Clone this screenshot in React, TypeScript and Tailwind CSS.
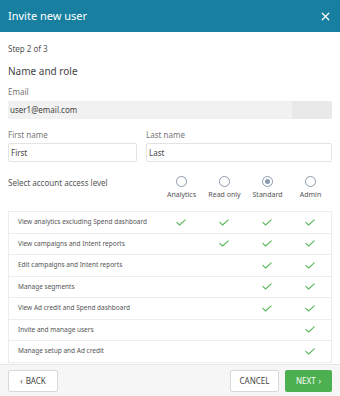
import { X } from 'lucide-react';

const levels = ['Analytics', 'Read only', 'Standard', 'Admin'];

const permissions: { label: string; from: number }[] = [
	{ label: 'View analytics excluding Spend dashboard', from: 0 },
	{ label: 'View campaigns and Intent reports', from: 1 },
	{ label: 'Edit campaigns and Intent reports', from: 2 },
	{ label: 'Manage segments', from: 2 },
	{ label: 'View Ad credit and Spend dashboard', from: 2 },
	{ label: 'Invite and manage users', from: 3 },
	{ label: 'Manage setup and Ad credit', from: 3 },
];

const Check = () => (
	<svg width="10" height="7" viewBox="0 0 10 7" fill="none">
		<path
			d="M0.8 3.4L3.6 6L9.2 0.8"
			stroke="#5cb85c"
			strokeWidth="1.1"
			strokeLinecap="round"
			strokeLinejoin="round"
		/>
	</svg>
);

const Radio = ({ checked }: { checked?: boolean }) => (
	<span className="flex h-[11px] w-[11px] items-center justify-center rounded-full border border-[#8c9aad] bg-white">
		{checked && <span className="h-[5px] w-[5px] rounded-full bg-[#8c9aad]" />}
	</span>
);

const App = (): JSX.Element => {
	return (
		<div
			className="flex h-[396px] w-[340px] flex-col bg-white text-[#444]"
			style={{ fontFamily: '"Noto Sans", Arial, sans-serif' }}
		>
			<div className="flex h-[32px] shrink-0 items-center justify-between bg-[#187fa1] pl-2 pr-[8px]">
				<span className="text-[11px] text-white">Invite new user</span>
				<X size={13} strokeWidth={2.2} className="text-white" />
			</div>

			<div className="flex flex-1 flex-col px-2">
				<div className="mt-[12px] text-[8px] leading-[10px] text-[#555]">Step 2 of 3</div>
				<div className="mt-[11px] text-[10px] leading-[12px] text-[#444]">Name and role</div>

				<div className="mt-[10px] text-[8px] leading-[10px] text-[#777]">Email</div>
				<div className="mt-[4px] flex h-[18px] rounded-[2px] bg-[#e9e9e9]">
					<div className="flex w-[284px] items-center bg-[#f1f1f1] pl-[2px] text-[8px] text-[#444]">
						user1@email.com
					</div>
				</div>

				<div className="mt-[11px] flex gap-[9px]">
					<div className="flex w-[129px] flex-col">
						<span className="text-[8px] leading-[10px] text-[#777]">First name</span>
						<div className="mt-[3px] flex h-[19px] items-center rounded-[2px] border border-[#e3e3e3] px-[2px] text-[8px]">
							First
						</div>
					</div>
					<div className="flex flex-1 flex-col">
						<span className="text-[8px] leading-[10px] text-[#777]">Last name</span>
						<div className="mt-[3px] flex h-[19px] items-center rounded-[2px] border border-[#e3e3e3] px-[2px] text-[8px]">
							Last
						</div>
					</div>
				</div>

				<div className="mt-[14px] grid grid-cols-[1fr_43px_43px_43px_43px]">
					<span className="pt-[2px] text-[8px] leading-[10px] text-[#555]">Select account access level</span>
					{levels.map((l, i) => (
						<div key={l} className="flex flex-col items-center">
							<Radio checked={i === 2} />
							<span className="mt-[3px] text-[7px] leading-[9px] text-[#555]">{l}</span>
						</div>
					))}
				</div>

				<div className="mt-[12px] flex flex-col border border-b-0 border-[#ececec]">
					{permissions.map((p) => (
						<div
							key={p.label}
							className="grid h-[21.5px] grid-cols-[1fr_43px_43px_43px_43px] items-center border-b border-[#ececec]"
						>
							<span className="pl-[9px] text-[6.5px] text-[#555]">{p.label}</span>
							{levels.map((l, i) => (
								<div key={l} className="flex justify-center">
									{i >= p.from && <Check />}
								</div>
							))}
						</div>
					))}
				</div>
			</div>

			<div className="flex h-[32px] shrink-0 items-center justify-between border-t border-[#e6e6e6] bg-[#f6f6f6] px-2">
				<button className="flex h-[22px] w-[50px] items-center justify-center gap-[3px] rounded-[2px] border border-[#d8d8d8] bg-white text-[8px] text-[#444]">
					<span className="text-[8px]">‹</span>BACK
				</button>
				<div className="flex gap-[6px]">
					<button className="flex h-[22px] w-[49px] items-center justify-center rounded-[2px] border border-[#d8d8d8] bg-white text-[8px] text-[#444]">
						CANCEL
					</button>
					<button className="flex h-[22px] w-[47px] items-center justify-center gap-[3px] rounded-[2px] bg-[#4caf50] text-[8px] text-white">
						NEXT<span className="text-[8px]">›</span>
					</button>
				</div>
			</div>
		</div>
	);
};

export default App;
